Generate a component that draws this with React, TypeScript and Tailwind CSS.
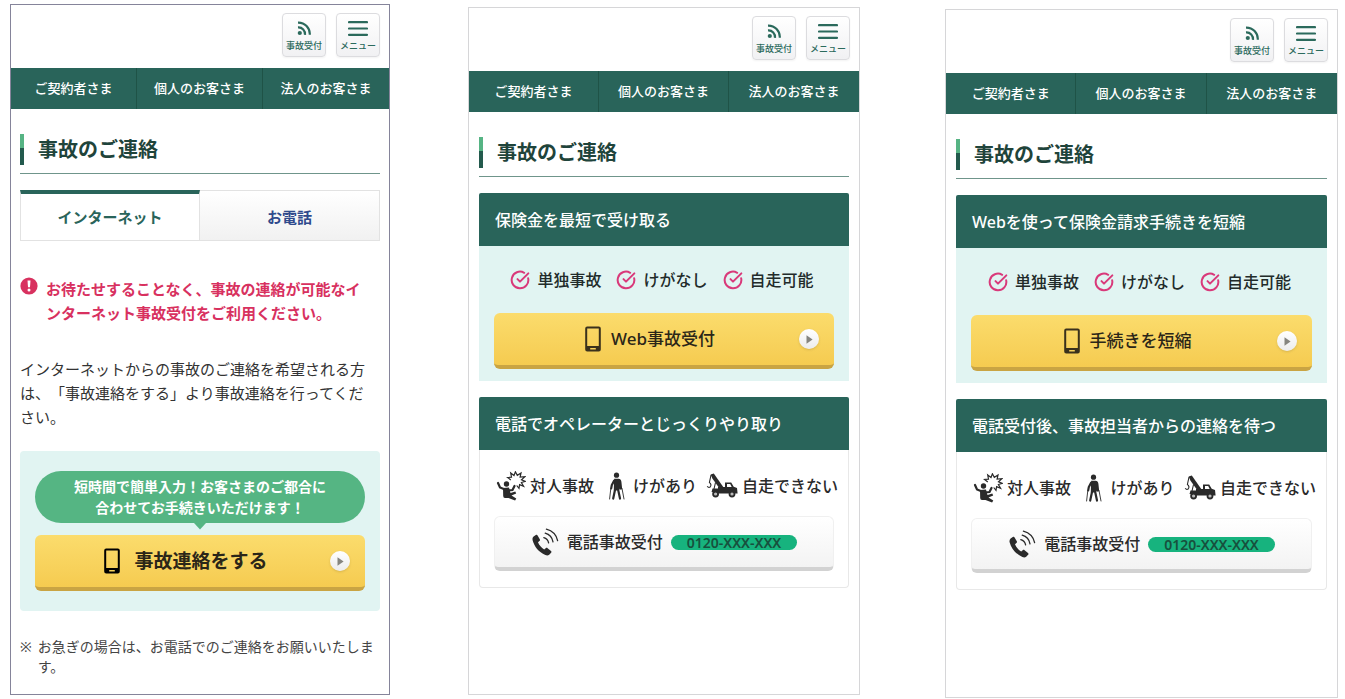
import React, { ReactNode } from 'react';
import { CircleCheckBig } from 'lucide-react';

interface IconProps {
  className?: string;
}

const NAV_ITEMS = ['ご契約者さま', '個人のお客さま', '法人のお客さま'];
const EASY_CASES = ['単独事故', 'けがなし', '自走可能'];

function SignalIcon() {
  return (
    <svg width="14" height="15" viewBox="0 0 14 15" fill="none" stroke="currentColor" aria-hidden="true">
      <circle cx="2.8" cy="12" r="2.1" fill="currentColor" stroke="none" />
      <path d="M1 6.4a6.6 6.6 0 0 1 7 7.400" strokeWidth="2.2" />
      <path d="M1 1.6a11.5 11.5 0 0 1 11.8 12.200" strokeWidth="2.2" />
    </svg>
  );
}

function MenuIcon() {
  return (
    <svg width="20" height="15" viewBox="0 0 20 15" stroke="currentColor" strokeWidth="2.2" strokeLinecap="round" aria-hidden="true">
      <path d="M1 1.2h18M1 7.5h18M1 13.8h18" />
    </svg>
  );
}

function PhoneDeviceIcon({ className }: IconProps) {
  return (
    <svg width="16" height="26" viewBox="0 0 16 26" className={className} aria-hidden="true">
      <path
        fill="currentColor"
        fillRule="evenodd"
        d="M2.2 0.5h11.6a2 2 0 0 1 2 2v21a2 2 0 0 1-2 2H2.2a2 2 0 0 1-2-2v-21a2 2 0 0 1 2-2ZM2.2 2.6v17.4h11.6V2.6ZM5.2 22v1.5h5.6V22Z"
      />
    </svg>
  );
}

function PlayBadge() {
  return (
    <span className="flex size-5 items-center justify-center rounded-full bg-linear-to-b from-white to-[#ececec] shadow-sm">
      <svg width="7" height="9" viewBox="0 0 7 9" fill="#85857f" aria-hidden="true">
        <path d="M0.5 0.3 6.6 4.5 0.5 8.7Z" />
      </svg>
    </span>
  );
}

function AlertIcon() {
  return (
    <svg width="18" height="18" viewBox="0 0 18 18" className="shrink-0" aria-hidden="true">
      <circle cx="9" cy="9" r="8.6" fill="#d8315f" />
      <path d="M7.5 3.4h3l-.5 6.800H8Z" fill="#fff" />
      <circle cx="9" cy="13" r="1.5" fill="#fff" />
    </svg>
  );
}

function CrashIcon() {
  return (
    <svg width="30" height="30" viewBox="0 0 30 30" fill="none" stroke="currentColor" aria-hidden="true">
      <path
        strokeWidth="1.2"
        d="m14.8 9-3.2-2.600 3.900-.2-.8-4.200 3.300 2.500 1.400-3.700 1.900 3.500 3.700-2.300-.9 4 4.700-.3-3.300 3 3.900 1.700-4 1.100 2.200 3.800-4-1.600-.6 3.700-2.300-2.900"
      />
      <circle cx="10.500" cy="13" r="2.700" fill="currentColor" stroke="none" />
      <path strokeWidth="2.200" strokeLinecap="round" d="M2 12l2 4.500 5 2M18.500 15l-2 4-5 .5" />
      <path d="M7 17l6-.5 1.500 5.500 4.800-1.600.9 2-4.700 2.200 4.800 3-1.200 2L12.500 27H9q-1.800 0-1.800-2Z" fill="currentColor" stroke="none" />
    </svg>
  );
}

function CaneIcon() {
  return (
    <svg width="26" height="28" viewBox="0 0 26 28" fill="none" stroke="currentColor" strokeLinecap="round" aria-hidden="true">
      <circle cx="13.5" cy="3.2" r="2.6" fill="currentColor" stroke="none" />
      <path d="M11.2 6.800h4.4q2.400 0 2.800 3l.8 7.400-2.6.6-.4-1.4-.2 2h-5.200l.2-9Z" fill="currentColor" stroke="none" />
      <path strokeWidth="2.200" d="M11.2 8.6 8.8 13l-.6 3.400M12 18l-1.8 8.600M15.200 18l1.800 8.600" />
      <path strokeWidth="0.9" d="M7.800 16.5 6.600 27M19 16.5l2 10.5" />
    </svg>
  );
}

function TowTruckIcon() {
  return (
    <svg width="32" height="26" viewBox="0 0 32 26" fill="none" stroke="currentColor" aria-hidden="true">
      <path d="M4.600 1.400 7.800.6 17.600 14.500h-4.800L6.400 5.400Z" fill="currentColor" stroke="none" />
      <path strokeWidth="1.1" d="M5 2 3.400 9.500q2.600 2 .8 4.500-1.800 1-3-.8M9.500 9.500 8 16" />
      <path d="M6.500 15.500h12V19h-13Z" fill="currentColor" stroke="none" />
      <path d="M12 14h7v-4.500h6.200l2.500 4.300 3.300 1.200.6 5.500H7V17h5Z" fill="currentColor" stroke="none" />
      <path d="M21 11h3.200l1.500 2.900H21Z" fill="#fff" stroke="none" />
      <g fill="#bbb" strokeWidth="1.8">
        <circle cx="9.600" cy="21" r="2.500" />
        <circle cx="26" cy="21" r="2.500" />
      </g>
    </svg>
  );
}

function CallIcon() {
  return (
    <svg width="28" height="28" viewBox="0 0 28 28" fill="none" stroke="currentColor" aria-hidden="true">
      <path
        fill="currentColor"
        stroke="none"
        d="M2.6 8.6 4.8 7c.7-.5 1.4-.3 1.8.4l2.2 3.8c.4.7.2 1.4-.4 1.8L7 14.2c1.2 3 3.4 5.6 6.2 7.2l1.5-1.2c.6-.5 1.3-.5 1.9 0l3.4 2.8c.6.5.7 1.2.1 1.8l-1.9 2c-1 .9-2.5.9-3.8.3C7.6 23.9 3.3 18.6 1.6 12.2c-.3-1.5 0-2.7 1-3.6Z"
      />
      <path strokeWidth="1.3" strokeLinecap="round" d="M12.8 9.6q4 1.2 4.800 5.300M14.2 5.200q6.6 2 7.800 8.600M15.4 1.2q9.3 2.6 11.2 11.400" />
    </svg>
  );
}

function HeaderButton({ icon, label }: { icon: ReactNode; label: string }) {
  return (
    <button
      type="button"
      className="flex size-11 flex-col items-center justify-end gap-1 rounded border border-[#dcdcdf] bg-linear-to-b from-white to-[#f1f1f3] pb-1 text-[#2b6a5c] shadow-xs"
    >
      {icon}
      <span className="text-[9px] leading-3 font-medium whitespace-nowrap">{label}</span>
    </button>
  );
}

function SiteHeader() {
  return (
    <header>
      <div className="flex justify-end gap-[10px] px-[9px] pt-2 pb-[11px]">
        <HeaderButton icon={<SignalIcon />} label="事故受付" />
        <HeaderButton icon={<MenuIcon />} label="メニュー" />
      </div>
      <nav className="grid grid-cols-3 divide-x divide-[#1f5347] bg-[#29645a] text-center text-[13px] leading-[41px] font-medium text-white">
        {NAV_ITEMS.map((item) => (
          <a key={item} href="#" className="whitespace-nowrap">
            {item}
          </a>
        ))}
      </nav>
    </header>
  );
}

function PageTitle() {
  return (
    <div className="mt-[25px] flex items-center gap-[14px] border-b border-[#6f958b] pb-2">
      <span className="h-[31px] w-1 bg-linear-to-b from-[#56b484] from-45% to-[#235a4d] to-45%" />
      <h1 className="pt-px text-[20px] leading-[30px] font-bold text-[#1f443b]">事故のご連絡</h1>
    </div>
  );
}

function YellowButton({ children }: { children: ReactNode }) {
  return (
    <button
      type="button"
      className="relative flex h-14 w-full items-center justify-center rounded-md border-b-4 border-[#c9a443] bg-linear-to-b from-[#fbdc6c] to-[#f5cb50] pr-7 text-[#2b2618]"
    >
      {children}
      <span className="absolute right-[15px]">
        <PlayBadge />
      </span>
    </button>
  );
}

function Section({ title, className, children }: { title: string; className: string; children: ReactNode }) {
  return (
    <section className="mt-4">
      <h2 className="rounded-t-xs bg-[#29645a] px-4 pt-px text-[16px] leading-[52px] font-medium text-white">{title}</h2>
      <div className={className}>{children}</div>
    </section>
  );
}

function InternetTabScreen() {
  return (
    <div className="mb-[3px] border border-[#85849a] bg-white">
      <SiteHeader />
      <main className="px-[9px] pb-3">
        <PageTitle />
        <div role="tablist" className="mt-4 grid h-[51px] grid-cols-2 text-[15px] font-bold">
          <button type="button" role="tab" aria-selected="true" className="border border-t-4 border-[#e2e2e2] border-t-[#29645a] text-[#29645a]">
            インターネット
          </button>
          <button type="button" role="tab" aria-selected="false" className="border border-l-0 border-[#e2e2e2] bg-linear-to-b from-white to-[#f1f1f1] pt-1 text-[#2f4a8c]">
            お電話
          </button>
        </div>

        <div className="mt-9 flex gap-2 text-[15px] leading-6 font-bold text-[#d8315f]">
          <AlertIcon />
          <p>
            お待たせすることなく、事故の連絡が可能なイ
            <br />
            ンターネット事故受付をご利用ください。
          </p>
        </div>

        <p className="mt-8 text-[15px] leading-6 text-[#333] [text-spacing-trim:space-all]">
          インターネットからの事故のご連絡を希望される方
          <br />
          は、「事故連絡をする」より事故連絡を行ってくだ
          <br />
          さい。
        </p>

        <div className="mt-[22px] rounded-sm bg-[#e1f4f2] px-[15px] py-5">
          <p className="relative mb-3 rounded-full bg-[#55b583] py-[5px] text-center text-[14px] leading-[21px] font-bold text-white">
            短時間で簡単入力！お客さまのご都合に
            <br />
            合わせてお手続きいただけます！
            <svg width="12" height="7" viewBox="0 0 12 7" className="absolute top-full left-1/2 -translate-x-1/2" fill="#55b583" aria-hidden="true">
              <path d="M0 0h12L6 6.5Z" />
            </svg>
          </p>
          <YellowButton>
            <PhoneDeviceIcon className="mr-[14px] text-black" />
            <span className="text-[19px] font-bold">事故連絡をする</span>
          </YellowButton>
        </div>

        <p className="mt-[26px] flex gap-[6px] text-[14px] leading-5 text-[#444]">
          <span>※</span>
          <span>お急ぎの場合は、お電話でのご連絡をお願いいたします。</span>
        </p>
      </main>
    </div>
  );
}

interface RouteScreenProps {
  className: string;
  webTitle: string;
  webButton: string;
  phoneTitle: string;
}

function RouteScreen({ className, webTitle, webButton, phoneTitle }: RouteScreenProps) {
  return (
    <div className={`border border-[#d6d6d8] bg-white ${className}`}>
      <SiteHeader />
      <main className="px-[10px]">
        <PageTitle />
        <Section title={webTitle} className="bg-[#e1f4f2] px-[15px] pt-[22px] pb-3">
          <ul className="mb-[21px] flex items-center justify-center gap-[15px] pr-1 text-[16px] leading-6 font-medium text-[#222b2a]">
            {EASY_CASES.map((item) => (
              <li key={item} className="flex items-center gap-[7px]">
                <CircleCheckBig size={20} strokeWidth={2.4} color="#d9397a" />
                {item}
              </li>
            ))}
          </ul>
          <YellowButton>
            <PhoneDeviceIcon className="mr-[10px] text-[#3a311c]" />
            <span className="text-[17px] font-medium">{webButton}</span>
          </YellowButton>
        </Section>

        <Section title={phoneTitle} className="rounded-b-sm border border-t-0 border-[#e8e8e8] pt-[21px] pb-4">
          <ul className="mb-[15px] flex items-center justify-between pr-[10px] pl-4 text-[16px] font-medium whitespace-nowrap text-[#2a2a2a]">
            <li className="flex items-center gap-1">
              <CrashIcon />
              対人事故
            </li>
            <li className="flex items-center gap-1">
              <CaneIcon />
              けがあり
            </li>
            <li className="flex items-center gap-1">
              <TowTruckIcon />
              自走できない
            </li>
          </ul>
          <div className="px-[14px]">
            <button
              type="button"
              className="flex h-[55px] w-full items-center justify-center gap-2 rounded-md border border-b-4 border-[#f0f0f0] border-b-[#d2d2d2] bg-linear-to-b from-white to-[#f3f3f3] text-[#2a2a2a]"
            >
              <CallIcon />
              <span className="text-[16px] font-medium">電話事故受付</span>
              <span className="rounded-full bg-[#17b37e] px-4 text-[14px] leading-[15px] font-semibold text-[#17503d]">0120-XXX-XXX</span>
            </button>
          </div>
        </Section>
      </main>
    </div>
  );
}

export default function App() {
  return (
    <div className="grid min-h-screen grid-cols-[380fr_392fr_400fr] gap-x-[78px] bg-white pt-1 pr-[7px] pb-px pl-[10px] font-['Noto_Sans','Noto_Sans_CJK_JP',sans-serif]">
      <InternetTabScreen />
      <RouteScreen
        className="mt-[3px] mb-[3px]"
        webTitle="保険金を最短で受け取る"
        webButton="Web事故受付"
        phoneTitle="電話でオペレーターとじっくりやり取り"
      />
      <RouteScreen
        className="mt-[5px] ml-[7px]"
        webTitle="Webを使って保険金請求手続きを短縮"
        webButton="手続きを短縮"
        phoneTitle="電話受付後、事故担当者からの連絡を待つ"
      />
    </div>
  );
}
